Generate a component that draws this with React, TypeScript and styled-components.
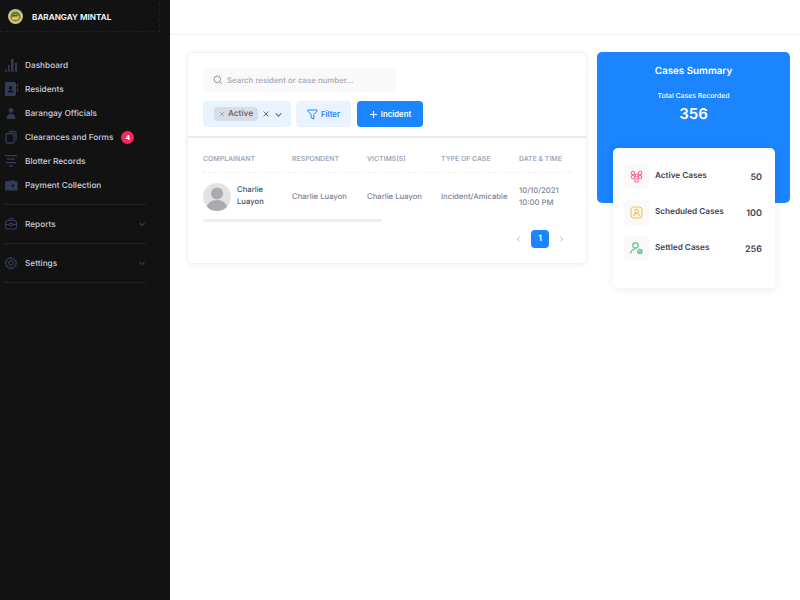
import React from 'react';
import styled, { createGlobalStyle } from 'styled-components';

const GlobalStyle = createGlobalStyle`
  html, body { margin: 0; padding: 0; background: #fff; }
  body { font-family: Inter, "Liberation Sans", sans-serif; text-rendering: geometricPrecision; }
  * { box-sizing: border-box; }
`;

const Page = styled.div`
  display: flex;
  width: 800px;
  height: 600px;
  overflow: hidden;
`;

const Sidebar = styled.aside`
  flex: 0 0 170px;
  background: #121212;
  padding-top: 2px;
`;

const Brand = styled.div`
  display: flex;
  align-items: center;
  gap: 9px;
  width: 160px;
  height: 30px;
  padding-left: 8px;
  border: 1px dashed #1f1f24;
  border-width: 0 1px 1px 0;
  color: #fff;
  font-size: 8.2px;
  font-weight: 600;
`;

const Logo = styled.svg`
  width: 15px;
  height: 15px;
  flex: none;
`;

const Menu = styled.nav`
  display: flex;
  flex-direction: column;
  padding: 21px 24px 0 4px;
`;

const Item = styled.div`
  display: flex;
  align-items: center;
  height: 24px;
  color: #c9cfe0;
  font-size: 8.25px;
  font-weight: 500;
`;

const ItemIcon = styled.svg`
  width: 14px;
  height: 14px;
  margin-right: 7px;
  flex: none;
  color: #343b57;
`;

const Badge = styled.span`
  display: flex;
  align-items: center;
  justify-content: center;
  width: 13px;
  height: 13px;
  margin-left: 8px;
  border-radius: 50%;
  background: #f8285a;
  color: #fff;
  font-size: 7px;
  font-weight: 700;
`;

const Chevron = styled.svg`
  width: 8px;
  height: 8px;
  margin-left: auto;
  color: #4b5268;
`;

const Rule = styled.div<{ $gap: number }>`
  height: 1px;
  margin-top: ${(p) => p.$gap}px;
  background: #222226;
`;

const Group = styled(Item)`
  margin-top: 6.5px;
`;

const Content = styled.div`
  flex: 1;
  display: flex;
  flex-direction: column;
`;

const Topbar = styled.header`
  height: 35px;
  border-bottom: 1px solid #f0f0f3;
`;

const Columns = styled.main`
  display: flex;
  align-items: flex-start;
  gap: 10px;
  padding: 17px 10px 0 17px;
`;

const CasesCard = styled.section`
  width: 400px;
  height: 212px;
  border: 1px solid #f1f1f4;
  border-radius: 5px;
  box-shadow: 0 1px 5px rgba(30, 40, 80, 0.06);
`;

const Tools = styled.div`
  height: 85px;
  padding: 15px 15px 0;
  border-bottom: 2px solid #e9e9ee;
`;

const Search = styled.div`
  display: flex;
  align-items: center;
  gap: 4px;
  width: 193px;
  height: 24px;
  padding-left: 10px;
  border-radius: 4px;
  background: #f9f9f9;
  color: #a6a8b8;
  font-size: 7.85px;
  font-weight: 500;
`;

const ToolRow = styled.div`
  display: flex;
  gap: 5px;
  margin-top: 9px;
`;

const Select = styled.div`
  display: flex;
  align-items: center;
  width: 88px;
  height: 26px;
  padding-left: 11px;
  border-radius: 4px;
  background: #e9f3ff;
  color: #6a6f80;
`;

const Tag = styled.span`
  display: flex;
  align-items: center;
  gap: 3px;
  width: 44px;
  height: 14px;
  padding: 0 0 1px 5px;
  margin-right: 4px;
  border-radius: 4px;
  background: #d8dce5;
  color: #5a6072;
  font-size: 8.3px;
  font-weight: 500;
`;

const Glyph = styled.svg<{ $size?: number }>`
  width: ${(p) => p.$size ?? 8}px;
  height: ${(p) => p.$size ?? 8}px;
  flex: none;
`;

const SelectArrow = styled(Glyph)`
  margin-left: 4px;
`;

const Button = styled.button<{ $primary?: boolean }>`
  display: flex;
  align-items: center;
  justify-content: center;
  gap: 3px;
  height: 26px;
  width: ${(p) => (p.$primary ? 66 : 55)}px;
  margin-left: ${(p) => (p.$primary ? 1 : 0)}px;
  padding: 0;
  border: 0;
  border-radius: 4px;
  background: ${(p) => (p.$primary ? '#1b84ff' : '#e9f3ff')};
  color: ${(p) => (p.$primary ? '#fff' : '#1b84ff')};
  font: 600 7.8px Inter, "Liberation Sans", sans-serif;
`;

const TableBox = styled.div`
  padding: 0 15px;
`;

const Grid = styled.div`
  display: grid;
  grid-template-columns: 89px 75px 74px 78px 1fr;
  align-items: center;
`;

const HeadRow = styled(Grid)`
  height: 35px;
  padding-top: 6px;
  border-bottom: 1px dashed #f1f1f4;
`;

const Head = styled.span`
  color: #a3a8bd;
  font-size: 6.9px;
  font-weight: 600;
  white-space: nowrap;
`;

const BodyRow = styled(Grid)`
  height: 46px;
  padding-top: 2px;
  color: #7e8299;
  font-size: 7.7px;
  font-weight: 500;
  line-height: 12px;
  white-space: nowrap;
`;

const Person = styled.div`
  display: flex;
  align-items: center;
  gap: 6px;
  color: #4b4f5f;
`;

const PersonName = styled.span`
  margin-top: -2px;
`;

const Avatar = styled.svg`
  width: 28px;
  height: 28px;
  border-radius: 50%;
`;

const Scroll = styled.div`
  width: 179px;
  height: 3px;
  border-radius: 2px;
  background: #eeeeef;
`;

const Pager = styled.div`
  display: flex;
  justify-content: flex-end;
  align-items: center;
  gap: 8px;
  margin-top: 8px;
  padding-right: 6px;
  color: #b5bdcf;
`;

const PageButton = styled.span`
  display: flex;
  align-items: center;
  justify-content: center;
  width: 18px;
  height: 18px;
  border-radius: 4px;
  background: #1b84ff;
  color: #fff;
  font-size: 8.5px;
  font-weight: 600;
`;

const SummaryColumn = styled.section`
  width: 193px;
`;

const SummaryHead = styled.div`
  height: 151px;
  padding-top: 13px;
  border-radius: 5px;
  background: #1b84ff;
  color: #fff;
  text-align: center;
`;

const SummaryTitle = styled.div`
  font-size: 9.8px;
  font-weight: 600;
  line-height: 13px;
`;

const SummaryLabel = styled.div`
  margin-top: 13px;
  font-size: 6.9px;
  font-weight: 500;
  line-height: 9px;
`;

const SummaryTotal = styled.div`
  margin-top: 5px;
  font-size: 15px;
  font-weight: 600;
  line-height: 18px;
`;

const StatCard = styled.div`
  display: flex;
  flex-direction: column;
  gap: 11px;
  width: 162px;
  height: 140px;
  margin: -55px 0 0 16px;
  position: relative;
  padding: 16px 13px 0 11px;
  border-radius: 5px;
  background: #fff;
  box-shadow: 0 2px 10px rgba(30, 40, 80, 0.08);
`;

const Stat = styled.div`
  display: flex;
  align-items: center;
  height: 25px;
  color: #3f4254;
  font-size: 8.2px;
  font-weight: 600;
`;

const StatIcon = styled.div`
  display: flex;
  align-items: center;
  justify-content: center;
  width: 25px;
  height: 25px;
  margin-right: 6px;
  border-radius: 4px;
  background: #f9f9f9;
`;

const StatName = styled.span`
  margin-top: -4px;
`;

const StatValue = styled.span`
  margin-left: auto;
  font-size: 9px;
  margin-top: 1px;
`;

const Down = () => (
  <Chevron viewBox="0 0 8 8" fill="none" stroke="currentColor" strokeWidth="1">
    <path d="M1.500 3l2.500 2.500L6.500 3" />
  </Chevron>
);

const Cross = ({ size, color }: { size: number; color: string }) => (
  <Glyph $size={size} viewBox="0 0 8 8" fill="none" stroke={color} strokeWidth="1">
    <path d="M1.500 1.500l5 5M6.500 1.500l-5 5" />
  </Glyph>
);

const menu: { label: string; badge?: string; icon: React.ReactNode }[] = [
  {
    label: 'Dashboard',
    icon: (
      <path fill="currentColor" d="M1 11h1.500v2H1zM4 7h1.500v6H4zM7 1h2.500v12H7zM11 5h2v8h-2zM.5 13h13v.6H.5z" />
    ),
  },
  {
    label: 'Residents',
    icon: (
      <path fill="currentColor" fillRule="evenodd" d="M2 0h8a2 2 0 0 1 2 2v10a2 2 0 0 1-2 2H2a1 1 0 0 1-1-1V1a1 1 0 0 1 1-1zm4.500 4a1.800 1.800 0 1 0 0 3.600 1.800 1.800 0 0 0 0-3.600zM3.500 10.500h6C9.500 9 8 8.200 6.500 8.200S3.500 9 3.500 10.500zM12.800 2H14v3h-1.200zM12.800 6.500H14v3h-1.200z" />
    ),
  },
  {
    label: 'Barangay Officials',
    icon: (
      <path fill="currentColor" d="M7 2a2.400 2.400 0 1 1 0 4.800A2.400 2.400 0 0 1 7 2zM5.300 8h3.400c1.700.8 2.500 2.800 2.800 5H2.500c.3-2.200 1.100-4.200 2.800-5z" />
    ),
  },
  {
    label: 'Clearances and Forms',
    badge: '4',
    icon: (
      <g fill="none" stroke="currentColor" strokeWidth="1.300">
        <rect x="2" y="3.500" width="8" height="9.500" rx="1.500" />
        <path d="M5 1.500h5.500A1.500 1.500 0 0 1 12 3v7" />
      </g>
    ),
  },
  {
    label: 'Blotter Records',
    icon: (
      <path fill="currentColor" d="M1 1h12v1.300H1zM3 4.500h8v1.300H3zM2 8h10v1.300H2zM5 11.500h4v1.300H5z" />
    ),
  },
  {
    label: 'Payment Collection',
    icon: (
      <path fill="currentColor" fillRule="evenodd" d="M1 3.500 10.500 2v1.500H13.500V12.500H1zM9 6.500a1.300 1.300 0 1 0 0 2.600 1.300 1.300 0 0 0 0-2.600z" />
    ),
  },
];

const stats = [
  {
    name: 'Active Cases',
    value: '50',
    icon: (
      <Glyph $size={13} viewBox="0 0 13 13" fill="none" stroke="#f8688c" strokeWidth="1.100">
        <circle cx="3" cy="3" r="1.700" />
        <circle cx="10" cy="3" r="1.700" />
        <circle cx="3" cy="7" r="1.700" />
        <circle cx="10" cy="7" r="1.700" />
        <circle cx="6.500" cy="5.500" r="1.500" />
        <circle cx="6.500" cy="10.500" r="1.800" />
      </Glyph>
    ),
  },
  {
    name: 'Scheduled Cases',
    value: '100',
    icon: (
      <Glyph $size={13} viewBox="0 0 13 13" fill="none" stroke="#f8c64e" strokeWidth="1.200">
        <rect x="1" y="1" width="11" height="11" rx="3" />
        <circle cx="6.500" cy="5" r="1.800" />
        <path d="M3.500 10c.4-2 1.500-2.700 3-2.700s2.600.7 3 2.700" />
      </Glyph>
    ),
  },
  {
    name: 'Settled Cases',
    value: '256',
    icon: (
      <Glyph $size={13} viewBox="0 0 13 13" fill="none" stroke="#4fc971" strokeWidth="1.200">
        <circle cx="5.500" cy="3.500" r="2.700" />
        <path d="M.8 11.500c.3-3 2-4.500 4.700-4.500" />
        <circle cx="9.800" cy="9.500" r="2.200" />
        <path d="M8.800 9.500l.8.800 1.200-1.300" />
      </Glyph>
    ),
  },
];

export default function App() {
  return (
    <Page>
      <GlobalStyle />
      <Sidebar>
        <Brand>
          <Logo viewBox="0 0 15 15">
            <circle cx="7.500" cy="7.500" r="7.500" fill="#c9c58a" />
            <circle cx="7.500" cy="7.500" r="5" fill="#6f7a3a" />
            <path d="M3.500 9l4-4 4 3-2 3H5z" fill="#e0c23e" />
            <path d="M5 6h4v1.500H5z" fill="#5a3f8a" />
          </Logo>
          BARANGAY MINTAL
        </Brand>
        <Menu>
          {menu.map((m) => (
            <Item key={m.label}>
              <ItemIcon viewBox="0 0 14 14">{m.icon}</ItemIcon>
              {m.label}
              {m.badge && <Badge>{m.badge}</Badge>}
            </Item>
          ))}
          <Rule $gap={7} />
          <Group>
            <ItemIcon viewBox="0 0 14 14" fill="none" stroke="currentColor" strokeWidth="1.100">
              <rect x="1.500" y="3.500" width="11" height="8.500" rx="2" />
              <path d="M5 3.500V2.500a1 1 0 0 1 1-1h2a1 1 0 0 1 1 1v1M1.500 7.500h3.500M9 7.500h3.500M5.500 6.500h3v2h-3z" />
            </ItemIcon>
            Reports
            <Down />
          </Group>
          <Rule $gap={7.5} />
          <Group>
            <ItemIcon viewBox="0 0 14 14" fill="none" stroke="currentColor" strokeWidth="1.100">
              <path d="M7 1.500l1.100 1.300 1.700-.3.600 1.600 1.600.6-.3 1.700L12.800 7l-1.100 1.100.3 1.700-1.600.6-.6 1.600-1.700-.3L7 13l-1.100-1.300-1.700.3-.6-1.600-1.600-.6.3-1.700L1.200 7l1.100-1.100-.3-1.700 1.600-.6.6-1.600 1.700.3z" />
              <circle cx="7" cy="7" r="2.200" />
            </ItemIcon>
            Settings
            <Down />
          </Group>
          <Rule $gap={7.5} />
        </Menu>
      </Sidebar>
      <Content>
        <Topbar />
        <Columns>
          <CasesCard>
            <Tools>
              <Search>
                <Glyph $size={10} viewBox="0 0 10 10" fill="none" stroke="#8f93a6" strokeWidth="1">
                  <circle cx="4.300" cy="4.300" r="3.300" />
                  <path d="M6.800 6.800 9 9" />
                </Glyph>
                Search resident or case number...
              </Search>
              <ToolRow>
                <Select>
                  <Tag>
                    <Cross size={6} color="#8f94a5" />
                    Active
                  </Tag>
                  <Cross size={8} color="#6a6f80" />
                  <SelectArrow $size={9} viewBox="0 0 8 8" fill="none" stroke="#6a6f80" strokeWidth=".9">
                    <path d="M1.500 3l2.500 2.500L6.500 3" />
                  </SelectArrow>
                </Select>
                <Button>
                  <Glyph $size={11} viewBox="0 0 11 11" fill="none" stroke="#1b84ff" strokeWidth="1">
                    <path d="M.8 1h9.400v1.200L6.800 5.500V10L4.200 8.800V5.500L.8 2.200z" />
                  </Glyph>
                  Filter
                </Button>
                <Button $primary>
                  <Glyph $size={9} viewBox="0 0 9 9" fill="none" stroke="#fff" strokeWidth="1.100">
                    <path d="M4.500 1v7M1 4.500h7" />
                  </Glyph>
                  Incident
                </Button>
              </ToolRow>
            </Tools>
            <TableBox>
              <HeadRow>
                <Head>COMPLAINANT</Head>
                <Head>RESPONDENT</Head>
                <Head>VICTIMS(S)</Head>
                <Head>TYPE OF CASE</Head>
                <Head>DATE &amp; TIME</Head>
              </HeadRow>
              <BodyRow>
                <Person>
                  <Avatar viewBox="0 0 28 28">
                    <rect width="28" height="28" fill="#e2e2e3" />
                    <circle cx="14" cy="10.500" r="6" fill="#aaabae" />
                    <ellipse cx="14" cy="24.500" rx="10" ry="7.500" fill="#aaabae" />
                  </Avatar>
                  <PersonName>
                    Charlie
                    <br />
                    Luayon
                  </PersonName>
                </Person>
                <span>Charlie Luayon</span>
                <span>Charlie Luayon</span>
                <span>Incident/Amicable</span>
                <span>
                  10/10/2021
                  <br />
                  10:00 PM
                </span>
              </BodyRow>
              <Scroll />
              <Pager>
                <Glyph viewBox="0 0 8 8" fill="none" stroke="currentColor" strokeWidth="1">
                  <path d="M5 1.500 2.500 4 5 6.500" />
                </Glyph>
                <PageButton>1</PageButton>
                <Glyph viewBox="0 0 8 8" fill="none" stroke="currentColor" strokeWidth="1">
                  <path d="M3 1.500 5.500 4 3 6.500" />
                </Glyph>
              </Pager>
            </TableBox>
          </CasesCard>
          <SummaryColumn>
            <SummaryHead>
              <SummaryTitle>Cases Summary</SummaryTitle>
              <SummaryLabel>Total Cases Recorded</SummaryLabel>
              <SummaryTotal>356</SummaryTotal>
            </SummaryHead>
            <StatCard>
              {stats.map((s) => (
                <Stat key={s.name}>
                  <StatIcon>{s.icon}</StatIcon>
                  <StatName>{s.name}</StatName>
                  <StatValue>{s.value}</StatValue>
                </Stat>
              ))}
            </StatCard>
          </SummaryColumn>
        </Columns>
      </Content>
    </Page>
  );
}
